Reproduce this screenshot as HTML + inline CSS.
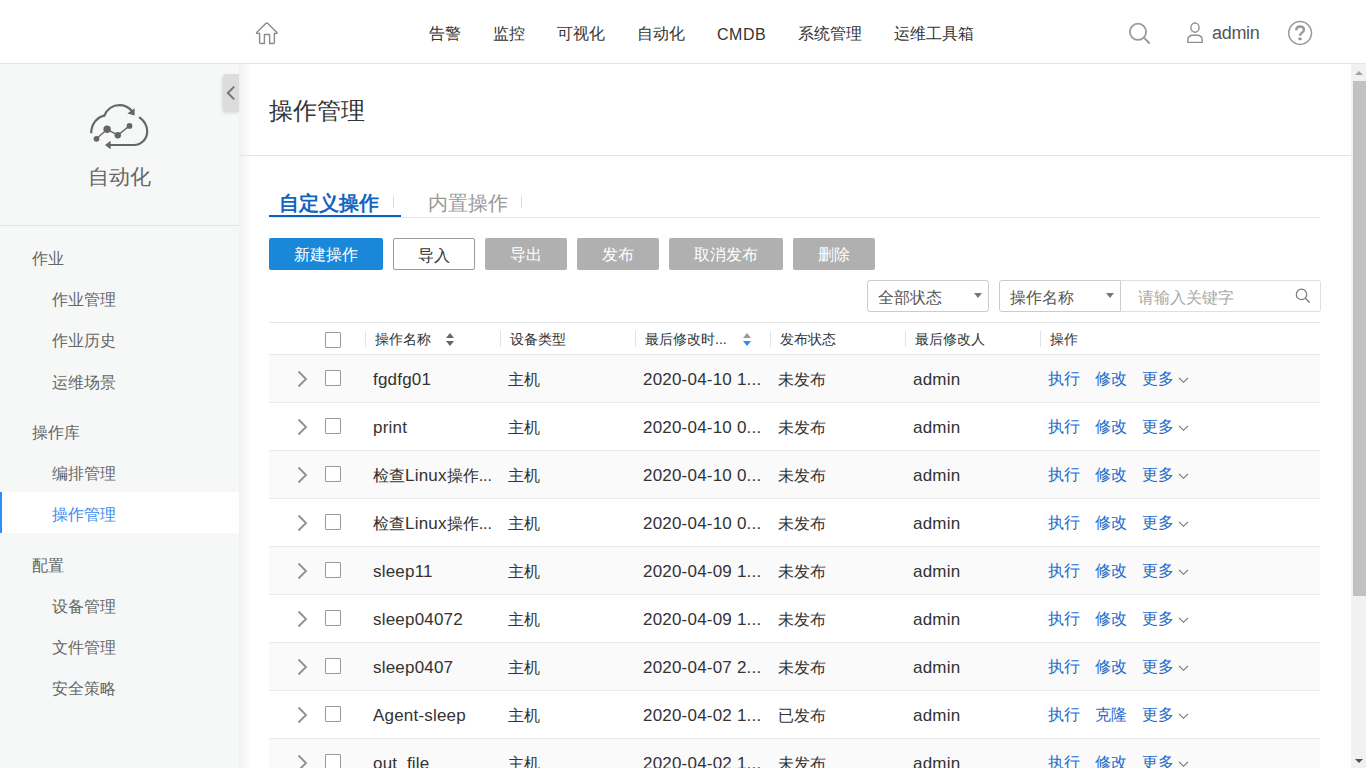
<!DOCTYPE html>
<html><head><meta charset="utf-8">
<style>
*{margin:0;padding:0;box-sizing:border-box}
html,body{width:1366px;height:768px;overflow:hidden;background:#fff;font-family:"Liberation Sans",sans-serif;color:#333}
.a{position:absolute;white-space:nowrap}
.L{font-size:17px;letter-spacing:.2px}
#hdr{position:absolute;left:0;top:0;width:1366px;height:64px;background:#fff;border-bottom:1px solid #e4e4e4}
.nav{position:absolute;top:23px;font-size:16px;line-height:22px;color:#333}
#side{position:absolute;left:0;top:64px;width:239px;height:704px;background:#f6f8f8}
.sh{position:absolute;left:32px;font-size:16px;line-height:22px;color:#666}
.si{position:absolute;left:52px;font-size:16px;line-height:22px;color:#666}
#main{position:absolute;left:239px;top:64px;width:1112px;height:704px;background:#fff}
.btn{position:absolute;top:238px;height:32px;font-size:16px;line-height:34px;text-align:center;border-radius:2px;color:#fff;background:#b0b0b0}
.th{position:absolute;top:328px;font-size:14px;line-height:22px;color:#333}
.sep{position:absolute;top:331px;width:1px;height:16px;background:#e3e3e3}
.row{position:absolute;left:269px;width:1051px;height:48px;border-bottom:1px solid #e8e8e8}
.row.g{background:#fafafa}
.cell{position:absolute;top:14px;font-size:16px;line-height:22px;color:#333}
.lnk{position:absolute;top:13px;font-size:16px;line-height:22px;color:#1f6bc8}
.cb{position:absolute;left:56px;width:16px;height:16px;border:1px solid #999;border-radius:1px;background:#fff}
</style></head>
<body>
<div id="hdr">
  <svg class="a" style="left:250px;top:16px" width="34" height="34" viewBox="250 16 34 34">
    <path d="M264.4,43.5 V34.5 H269.6 V43.5 H273.4 Q274.4,43.5 274.4,42.5 V33.4 H276.4 Q277.6,33.4 276.9,32.6 L267.6,23.3 Q266.8,22.5 266,23.3 L256.7,32.6 Q256,33.4 257.2,33.4 H259.6 V42.5 Q259.6,43.5 260.6,43.5 Z" fill="none" stroke="#8a8a8a" stroke-width="1.4" stroke-linejoin="round" stroke-linecap="round"/>
  </svg>
  <div class="nav" style="left:429px">告警</div>
  <div class="nav" style="left:493px">监控</div>
  <div class="nav" style="left:557px">可视化</div>
  <div class="nav" style="left:637px">自动化</div>
  <div class="nav" style="left:717px;top:24px;letter-spacing:.5px">CMDB</div>
  <div class="nav" style="left:798px">系统管理</div>
  <div class="nav" style="left:894px">运维工具箱</div>
  <svg class="a" style="left:1120px;top:14px" width="40" height="40" viewBox="1120 14 40 40">
    <circle cx="1138" cy="31.8" r="8.1" fill="none" stroke="#999" stroke-width="1.8"/>
    <line x1="1143.9" y1="37.7" x2="1149.2" y2="43" stroke="#999" stroke-width="1.9" stroke-linecap="round"/>
  </svg>
  <svg class="a" style="left:1180px;top:16px" width="30" height="32" viewBox="1180 16 30 32">
    <ellipse cx="1195" cy="27.6" rx="4.1" ry="4.6" fill="none" stroke="#909090" stroke-width="1.4"/>
    <path d="M1187.8,42.4 V40.4 Q1187.8,35.2 1193,35.2 H1197 Q1202.2,35.2 1202.2,40.4 V42.4 Z" fill="none" stroke="#909090" stroke-width="1.4" stroke-linejoin="round"/>
  </svg>
  <div class="a" style="left:1212px;top:21px;font-size:18px;line-height:24px;color:#555;letter-spacing:-.3px">admin</div>
  <svg class="a" style="left:1284px;top:17px" width="32" height="32" viewBox="1284 17 32 32">
    <circle cx="1300.1" cy="33" r="11.4" fill="none" stroke="#999" stroke-width="1.5"/>
    <path d="M1296.3,30.2 Q1296.3,26.5 1300.1,26.5 Q1303.9,26.5 1303.9,29.8 Q1303.9,31.8 1301.6,33 Q1300.1,33.8 1300.1,35.8" fill="none" stroke="#999" stroke-width="2.5"/>
    <rect x="1298.4" y="37.4" width="3.2" height="2.8" rx="0.8" fill="#999"/>
  </svg>
</div>
<div id="side">
  <svg class="a" style="left:80px;top:31px" width="80" height="65" viewBox="80 95 80 65">
    <g fill="none" stroke="#666" stroke-width="2.2" stroke-linecap="round">
      <path d="M91.2,132.4 C91.5,124 96.5,117.5 104.2,115.6"/>
      <path d="M104.4,115.6 C107,109 113,105.1 119.5,105.1 C124.5,105.1 128.5,107.2 131.5,110.6"/>
      <path d="M139.8,117.6 C144.5,121 147.2,126 147.2,131.5 C147.2,139 141.5,145 134,145 H109"/>
      <polyline points="96.5,138.8 107.1,129.3 117.8,135.2 129.5,125.9" stroke-width="1.4"/>
    </g>
    <g fill="#666">
      <path d="M134.6,108.2 L134.6,115.4 L127.4,113.6 Z"/>
      <path d="M105,145 L110.6,140.8 L110.6,149.2 Z"/>
      <circle cx="96.5" cy="138.8" r="2.9"/>
      <circle cx="107.1" cy="129.3" r="3.7"/>
      <circle cx="117.8" cy="135.2" r="3.2"/>
      <circle cx="129.5" cy="125.9" r="2.9"/>
    </g>
  </svg>
  <div class="a" style="left:88px;top:100px;font-size:21px;line-height:26px;color:#666">自动化</div>
  <div class="a" style="left:0;top:161px;width:239px;height:1px;background:#e3e3e3"></div>
  <div class="sh" style="top:184px">作业</div>
  <div class="si" style="top:225px">作业管理</div>
  <div class="si" style="top:266px">作业历史</div>
  <div class="si" style="top:308px">运维场景</div>
  <div class="sh" style="top:358px">操作库</div>
  <div class="si" style="top:399px">编排管理</div>
  <div class="a" style="left:0;top:428px;width:239px;height:41px;background:#fff;border-left:2px solid #2b8ef8"></div>
  <div class="si" style="top:440px;color:#3d8cf0">操作管理</div>
  <div class="sh" style="top:491px">配置</div>
  <div class="si" style="top:532px">设备管理</div>
  <div class="si" style="top:573px">文件管理</div>
  <div class="si" style="top:614px">安全策略</div>
</div>
<div id="main">
  <div class="a" style="left:0;top:0;width:13px;height:704px;background:linear-gradient(to right,#eff1f3,rgba(255,255,255,0))"></div>
  <div class="a" style="left:30px;top:31px;font-size:24px;line-height:32px;color:#333">操作管理</div>
  <div class="a" style="left:0;top:91px;width:1112px;height:1px;background:#e4e4e4"></div>
  <div class="a" style="left:40px;top:126px;font-size:20px;line-height:26px;color:#1565c0;font-weight:bold">自定义操作</div>
  <div class="a" style="left:154px;top:132px;width:1px;height:12px;background:#ddd"></div>
  <div class="a" style="left:189px;top:126px;font-size:20px;line-height:26px;color:#999">内置操作</div>
  <div class="a" style="left:282px;top:132px;width:1px;height:12px;background:#ddd"></div>
  <div class="a" style="left:30px;top:153px;width:1051px;height:1px;background:#e6e6e6"></div>
  <div class="a" style="left:30px;top:151px;width:132px;height:2px;background:#0a62c4"></div>
</div>
<div class="btn" style="left:269px;width:114px;background:#1b87d8">新建操作</div>
<div class="btn" style="left:393px;width:82px;background:#fff;color:#333;border:1px solid #999">导入</div>
<div class="btn" style="left:485px;width:82px">导出</div>
<div class="btn" style="left:577px;width:82px">发布</div>
<div class="btn" style="left:669px;width:114px">取消发布</div>
<div class="btn" style="left:793px;width:82px">删除</div>
<div class="a" style="left:867px;top:280px;width:122px;height:32px;border:1px solid #ccc;border-radius:3px;background:#fff"></div>
<div class="a" style="left:878px;top:287px;font-size:16px;line-height:22px;color:#555">全部状态</div>
<div class="a" style="left:974px;top:293px;width:0;height:0;border-left:4px solid transparent;border-right:4px solid transparent;border-top:5px solid #777"></div>
<div class="a" style="left:999px;top:280px;width:122px;height:32px;border:1px solid #ccc;border-radius:3px 0 0 3px;background:#fff"></div>
<div class="a" style="left:1010px;top:287px;font-size:16px;line-height:22px;color:#555">操作名称</div>
<div class="a" style="left:1106px;top:293px;width:0;height:0;border-left:4px solid transparent;border-right:4px solid transparent;border-top:5px solid #777"></div>
<div class="a" style="left:1121px;top:280px;width:200px;height:32px;border:1px solid #e0e0e0;border-left:none;border-radius:0 3px 3px 0;background:#fff"></div>
<div class="a" style="left:1138px;top:287px;font-size:16px;line-height:22px;color:#aaa">请输入关键字</div>
<svg class="a" style="left:1292px;top:286px" width="22" height="22" viewBox="1292 286 22 22">
  <circle cx="1301.5" cy="294.4" r="5.2" fill="none" stroke="#7a7a7a" stroke-width="1.2"/>
  <line x1="1305.3" y1="298.2" x2="1309.6" y2="302.5" stroke="#7a7a7a" stroke-width="1.3"/>
</svg>
<div class="a" style="left:269px;top:322px;width:1051px;height:1px;background:#e6e6e6"></div>
<div class="a" style="left:269px;top:354px;width:1051px;height:1px;background:#e6e6e6"></div>
<div class="cb" style="left:325px;top:332px"></div>
<div class="sep" style="left:365px"></div>
<div class="th" style="left:375px">操作名称</div>
<div class="a" style="left:446px;top:333px;width:0;height:0;border-left:4px solid transparent;border-right:4px solid transparent;border-bottom:5px solid #666"></div>
<div class="a" style="left:446px;top:341px;width:0;height:0;border-left:4px solid transparent;border-right:4px solid transparent;border-top:5px solid #666"></div>
<div class="sep" style="left:500px"></div>
<div class="th" style="left:510px">设备类型</div>
<div class="sep" style="left:635px"></div>
<div class="th" style="left:645px">最后修改时...</div>
<div class="a" style="left:743px;top:333px;width:0;height:0;border-left:4px solid transparent;border-right:4px solid transparent;border-bottom:5px solid #999"></div>
<div class="a" style="left:743px;top:341px;width:0;height:0;border-left:4px solid transparent;border-right:4px solid transparent;border-top:5px solid #2a8cf8"></div>
<div class="sep" style="left:770px"></div>
<div class="th" style="left:780px">发布状态</div>
<div class="sep" style="left:905px"></div>
<div class="th" style="left:915px">最后修改人</div>
<div class="sep" style="left:1040px"></div>
<div class="th" style="left:1050px">操作</div>
<div class="row g" style="top:355px">
  <svg class="a" style="left:28px;top:15px" width="12" height="18" viewBox="0 0 12 18"><polyline points="1.5,1.5 9,9 1.5,16.5" fill="none" stroke="#8f8f8f" stroke-width="1.8"/></svg>
  <div class="cb" style="top:15px"></div>
  <div class="cell" style="left:104px"><span class="L">fgdfg01</span></div>
  <div class="cell" style="left:239px">主机</div>
  <div class="cell" style="left:374px"><span class="L">2020-04-10 1...</span></div>
  <div class="cell" style="left:509px">未发布</div>
  <div class="cell" style="left:644px"><span class="L">admin</span></div>
  <div class="lnk" style="left:779px">执行</div>
  <div class="lnk" style="left:826px">修改</div>
  <div class="lnk" style="left:873px">更多</div>
  <svg class="a" style="left:909px;top:21px" width="12" height="8" viewBox="0 0 12 8"><polyline points="1,1.8 5.5,6.3 10,1.8" fill="none" stroke="#707070" stroke-width="1.1"/></svg>
</div>
<div class="row" style="top:403px">
  <svg class="a" style="left:28px;top:15px" width="12" height="18" viewBox="0 0 12 18"><polyline points="1.5,1.5 9,9 1.5,16.5" fill="none" stroke="#8f8f8f" stroke-width="1.8"/></svg>
  <div class="cb" style="top:15px"></div>
  <div class="cell" style="left:104px"><span class="L">print</span></div>
  <div class="cell" style="left:239px">主机</div>
  <div class="cell" style="left:374px"><span class="L">2020-04-10 0...</span></div>
  <div class="cell" style="left:509px">未发布</div>
  <div class="cell" style="left:644px"><span class="L">admin</span></div>
  <div class="lnk" style="left:779px">执行</div>
  <div class="lnk" style="left:826px">修改</div>
  <div class="lnk" style="left:873px">更多</div>
  <svg class="a" style="left:909px;top:21px" width="12" height="8" viewBox="0 0 12 8"><polyline points="1,1.8 5.5,6.3 10,1.8" fill="none" stroke="#707070" stroke-width="1.1"/></svg>
</div>
<div class="row g" style="top:451px">
  <svg class="a" style="left:28px;top:15px" width="12" height="18" viewBox="0 0 12 18"><polyline points="1.5,1.5 9,9 1.5,16.5" fill="none" stroke="#8f8f8f" stroke-width="1.8"/></svg>
  <div class="cb" style="top:15px"></div>
  <div class="cell" style="left:104px">检查<span class="L">Linux</span>操作...</div>
  <div class="cell" style="left:239px">主机</div>
  <div class="cell" style="left:374px"><span class="L">2020-04-10 0...</span></div>
  <div class="cell" style="left:509px">未发布</div>
  <div class="cell" style="left:644px"><span class="L">admin</span></div>
  <div class="lnk" style="left:779px">执行</div>
  <div class="lnk" style="left:826px">修改</div>
  <div class="lnk" style="left:873px">更多</div>
  <svg class="a" style="left:909px;top:21px" width="12" height="8" viewBox="0 0 12 8"><polyline points="1,1.8 5.5,6.3 10,1.8" fill="none" stroke="#707070" stroke-width="1.1"/></svg>
</div>
<div class="row" style="top:499px">
  <svg class="a" style="left:28px;top:15px" width="12" height="18" viewBox="0 0 12 18"><polyline points="1.5,1.5 9,9 1.5,16.5" fill="none" stroke="#8f8f8f" stroke-width="1.8"/></svg>
  <div class="cb" style="top:15px"></div>
  <div class="cell" style="left:104px">检查<span class="L">Linux</span>操作...</div>
  <div class="cell" style="left:239px">主机</div>
  <div class="cell" style="left:374px"><span class="L">2020-04-10 0...</span></div>
  <div class="cell" style="left:509px">未发布</div>
  <div class="cell" style="left:644px"><span class="L">admin</span></div>
  <div class="lnk" style="left:779px">执行</div>
  <div class="lnk" style="left:826px">修改</div>
  <div class="lnk" style="left:873px">更多</div>
  <svg class="a" style="left:909px;top:21px" width="12" height="8" viewBox="0 0 12 8"><polyline points="1,1.8 5.5,6.3 10,1.8" fill="none" stroke="#707070" stroke-width="1.1"/></svg>
</div>
<div class="row g" style="top:547px">
  <svg class="a" style="left:28px;top:15px" width="12" height="18" viewBox="0 0 12 18"><polyline points="1.5,1.5 9,9 1.5,16.5" fill="none" stroke="#8f8f8f" stroke-width="1.8"/></svg>
  <div class="cb" style="top:15px"></div>
  <div class="cell" style="left:104px"><span class="L">sleep11</span></div>
  <div class="cell" style="left:239px">主机</div>
  <div class="cell" style="left:374px"><span class="L">2020-04-09 1...</span></div>
  <div class="cell" style="left:509px">未发布</div>
  <div class="cell" style="left:644px"><span class="L">admin</span></div>
  <div class="lnk" style="left:779px">执行</div>
  <div class="lnk" style="left:826px">修改</div>
  <div class="lnk" style="left:873px">更多</div>
  <svg class="a" style="left:909px;top:21px" width="12" height="8" viewBox="0 0 12 8"><polyline points="1,1.8 5.5,6.3 10,1.8" fill="none" stroke="#707070" stroke-width="1.1"/></svg>
</div>
<div class="row" style="top:595px">
  <svg class="a" style="left:28px;top:15px" width="12" height="18" viewBox="0 0 12 18"><polyline points="1.5,1.5 9,9 1.5,16.5" fill="none" stroke="#8f8f8f" stroke-width="1.8"/></svg>
  <div class="cb" style="top:15px"></div>
  <div class="cell" style="left:104px"><span class="L">sleep04072</span></div>
  <div class="cell" style="left:239px">主机</div>
  <div class="cell" style="left:374px"><span class="L">2020-04-09 1...</span></div>
  <div class="cell" style="left:509px">未发布</div>
  <div class="cell" style="left:644px"><span class="L">admin</span></div>
  <div class="lnk" style="left:779px">执行</div>
  <div class="lnk" style="left:826px">修改</div>
  <div class="lnk" style="left:873px">更多</div>
  <svg class="a" style="left:909px;top:21px" width="12" height="8" viewBox="0 0 12 8"><polyline points="1,1.8 5.5,6.3 10,1.8" fill="none" stroke="#707070" stroke-width="1.1"/></svg>
</div>
<div class="row g" style="top:643px">
  <svg class="a" style="left:28px;top:15px" width="12" height="18" viewBox="0 0 12 18"><polyline points="1.5,1.5 9,9 1.5,16.5" fill="none" stroke="#8f8f8f" stroke-width="1.8"/></svg>
  <div class="cb" style="top:15px"></div>
  <div class="cell" style="left:104px"><span class="L">sleep0407</span></div>
  <div class="cell" style="left:239px">主机</div>
  <div class="cell" style="left:374px"><span class="L">2020-04-07 2...</span></div>
  <div class="cell" style="left:509px">未发布</div>
  <div class="cell" style="left:644px"><span class="L">admin</span></div>
  <div class="lnk" style="left:779px">执行</div>
  <div class="lnk" style="left:826px">修改</div>
  <div class="lnk" style="left:873px">更多</div>
  <svg class="a" style="left:909px;top:21px" width="12" height="8" viewBox="0 0 12 8"><polyline points="1,1.8 5.5,6.3 10,1.8" fill="none" stroke="#707070" stroke-width="1.1"/></svg>
</div>
<div class="row" style="top:691px">
  <svg class="a" style="left:28px;top:15px" width="12" height="18" viewBox="0 0 12 18"><polyline points="1.5,1.5 9,9 1.5,16.5" fill="none" stroke="#8f8f8f" stroke-width="1.8"/></svg>
  <div class="cb" style="top:15px"></div>
  <div class="cell" style="left:104px"><span class="L">Agent-sleep</span></div>
  <div class="cell" style="left:239px">主机</div>
  <div class="cell" style="left:374px"><span class="L">2020-04-02 1...</span></div>
  <div class="cell" style="left:509px">已发布</div>
  <div class="cell" style="left:644px"><span class="L">admin</span></div>
  <div class="lnk" style="left:779px">执行</div>
  <div class="lnk" style="left:826px">克隆</div>
  <div class="lnk" style="left:873px">更多</div>
  <svg class="a" style="left:909px;top:21px" width="12" height="8" viewBox="0 0 12 8"><polyline points="1,1.8 5.5,6.3 10,1.8" fill="none" stroke="#707070" stroke-width="1.1"/></svg>
</div>
<div class="row g" style="top:739px">
  <svg class="a" style="left:28px;top:15px" width="12" height="18" viewBox="0 0 12 18"><polyline points="1.5,1.5 9,9 1.5,16.5" fill="none" stroke="#8f8f8f" stroke-width="1.8"/></svg>
  <div class="cb" style="top:15px"></div>
  <div class="cell" style="left:104px"><span class="L">out_file</span></div>
  <div class="cell" style="left:239px">主机</div>
  <div class="cell" style="left:374px"><span class="L">2020-04-02 1...</span></div>
  <div class="cell" style="left:509px">未发布</div>
  <div class="cell" style="left:644px"><span class="L">admin</span></div>
  <div class="lnk" style="left:779px">执行</div>
  <div class="lnk" style="left:826px">修改</div>
  <div class="lnk" style="left:873px">更多</div>
  <svg class="a" style="left:909px;top:21px" width="12" height="8" viewBox="0 0 12 8"><polyline points="1,1.8 5.5,6.3 10,1.8" fill="none" stroke="#707070" stroke-width="1.1"/></svg>
</div>
<div class="a" style="left:223px;top:74px;width:16px;height:38px;background:#dcdcdc;border-radius:4px 0 0 4px;box-shadow:-1px 1px 3px rgba(0,0,0,0.12)"></div>
<svg class="a" style="left:223px;top:74px" width="16" height="38" viewBox="223 74 16 38"><polyline points="234.2,86.6 227.8,93 234.2,99.4" fill="none" stroke="#757575" stroke-width="2"/></svg>
<div class="a" style="left:1351px;top:64px;width:15px;height:704px;background:#f1f1f1"></div>
<div class="a" style="left:1353px;top:81px;width:13px;height:515px;background:#c1c1c1"></div>
<div class="a" style="left:1355px;top:71px;width:0;height:0;border-left:4px solid transparent;border-right:4px solid transparent;border-bottom:4px solid #a3a3a3"></div>
<div class="a" style="left:1355px;top:759px;width:0;height:0;border-left:4px solid transparent;border-right:4px solid transparent;border-top:4px solid #505050"></div>
</body></html>
